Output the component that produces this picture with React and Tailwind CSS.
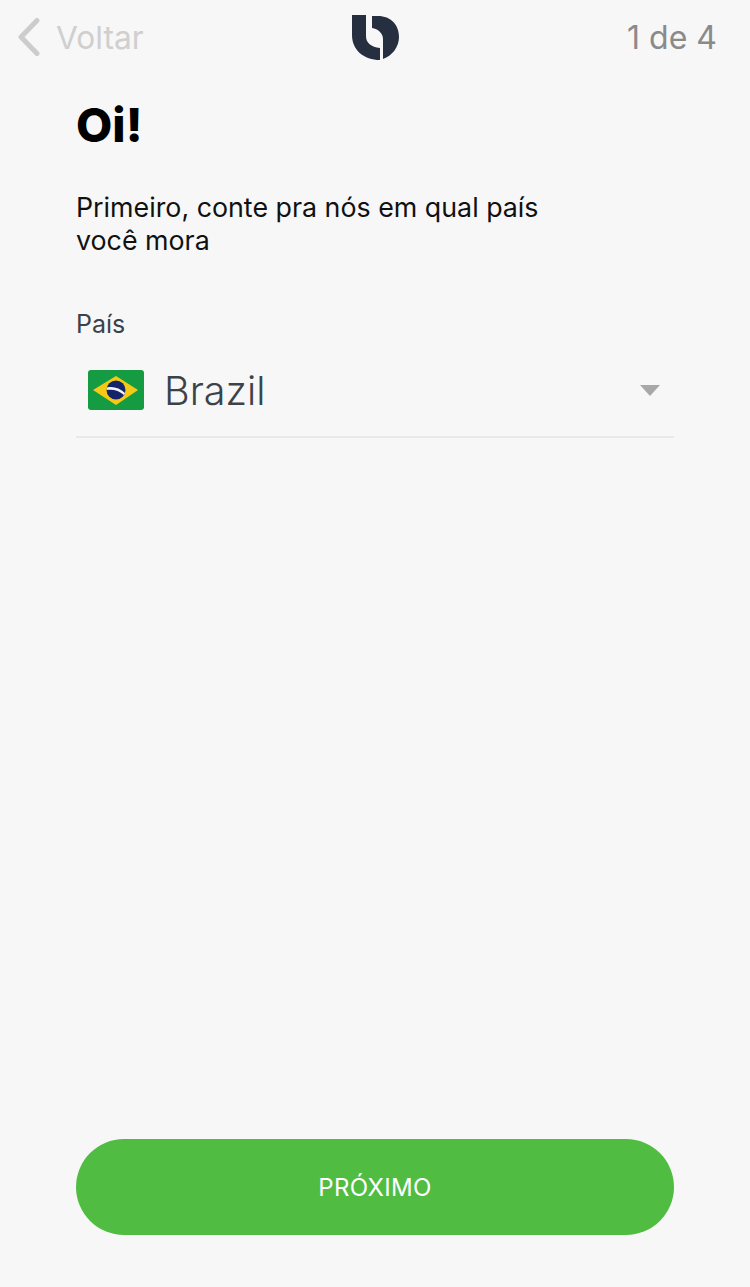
const font = { fontFamily: 'Inter, sans-serif' }

function Logo() {
  return (
    <svg width="50" height="48" viewBox="0 0 50 48" fill="#252f3f">
      <path d="M2 1 H16 V22 C16 29 21 33 30 34 V46 C14 46 2 36 2 21 Z" />
      <path d="M22 2 H28 C41 2 49 11 49 23 C49 33 42 42 33 45 V25 C33 19 28 15 22 14 Z" />
    </svg>
  )
}

function BrazilFlag() {
  return (
    <svg width="56" height="40" viewBox="0 0 56 40" className="shrink-0 -mt-[2px]">
      <rect width="56" height="40" rx="3" fill="#159c42" />
      <path d="M28 6 L50 20 L28 35 L5 20 Z" fill="#f6c915" />
      <circle cx="28" cy="20" r="9.5" fill="#14246b" />
      <path d="M19 17.5 C25 16 32 18 37 23 L36 25 C31 20.5 25 19 18.7 20 Z" fill="#f4f4f4" />
    </svg>
  )
}

export default function App() {
  return (
    <div className="h-[1287px] w-[750px] bg-[#f7f7f7] flex flex-col" style={font}>
      {/* Top nav */}
      <div className="grid grid-cols-[1fr_50px_1fr] items-center h-[60px] mt-[8px] px-[17px] shrink-0">
        <div className="flex items-center">
          <svg width="24" height="40" viewBox="0 0 24 40" fill="none" stroke="#cccccc" strokeWidth="5" strokeLinecap="round" strokeLinejoin="round">
            <path d="M20 2.5 L4 19 L20 35.5" />
          </svg>
          <span className="ml-[15px] text-[31.7px] text-[#cfcfcf] leading-none">Voltar</span>
        </div>
        <Logo />
        <div className="pr-[16px] text-right text-[32px] text-[#8a8a8a] leading-none">1 de 4</div>
      </div>

      {/* Content */}
      <div className="flex flex-col flex-1 px-[76px]">
        <h1 className="mt-[28px] text-[47px] leading-[58px] font-extrabold text-black">Oi!</h1>
        <p className="mt-[37px] text-[26.8px] leading-[33px] text-[#111111] w-[500px]">
          Primeiro, conte pra nós em qual país você mora
        </p>
        <label className="mt-[51px] text-[25px] leading-[32px] text-[#3c4249]">País</label>

        <div className="flex items-center h-[93px] mt-[5px] pl-[12px] pr-[14px] border-b-2 border-[#e9e9e9]">
          <BrazilFlag />
          <span className="ml-[20px] pt-[2px] text-[39.5px] font-light text-[#3c4249] leading-none">Brazil</span>
          <div className="ml-auto w-0 h-0 border-x-[10px] border-x-transparent border-t-[11px] border-t-[#a8a8a8]" />
        </div>

        <button className="mt-auto mb-[52px] pt-[2px] h-[96px] w-full rounded-[48px] bg-[#50bc42] text-white text-[24px] tracking-[0.3px]">
          PRÓXIMO
        </button>
      </div>
    </div>
  )
}
